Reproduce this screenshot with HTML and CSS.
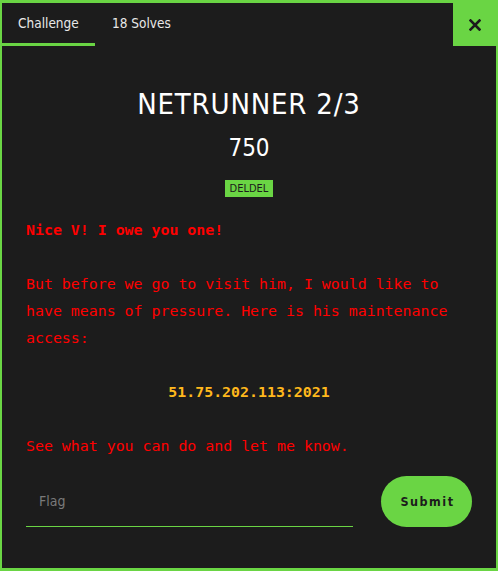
FILE: index.html
```html
<!DOCTYPE html>
<html>
<head>
<meta charset="utf-8">
<link rel="stylesheet" href="styles.css">
</head>
<body>
<div class="modal">
  <div class="header">
    <div class="tab active">Challenge</div>
    <div class="tab">18 Solves</div>
    <div class="spacer"></div>
    <button class="close" aria-label="Close">
      <svg width="12" height="12" viewBox="0 0 12 12"><path d="M1.5 1.5 L10.5 10.5 M10.5 1.5 L1.5 10.5" stroke="#1c1c1c" stroke-width="2.6" stroke-linecap="square"/></svg>
    </button>
  </div>
  <div class="content">
    <h1 class="title">NETRUNNER 2/3</h1>
    <div class="points">750</div>
    <div class="tags"><span class="tag">DELDEL</span></div>
    <div class="desc">
      <p class="strong">Nice V! I owe you one!</p>
      <p>But before we go to visit him, I would like to have means of pressure. Here is his maintenance access:</p>
      <p class="ip">51.75.202.113:2021</p>
      <p>See what you can do and let me know.</p>
    </div>
    <div class="form">
      <input class="flag" type="text" placeholder="Flag">
      <button class="submit">Submit</button>
    </div>
  </div>
</div>
</body>
</html>
```
FILE: styles.css
```css
html, body {
  margin: 0;
  padding: 0;
  background: #1c1c1c;
}
.modal {
  box-sizing: border-box;
  width: 498px;
  height: 571px;
  border-style: solid;
  border-color: #6ad544;
  border-width: 3px 2px 3px 2px;
  background: #1c1c1c;
  font-family: "DejaVu Sans Condensed", "DejaVu Sans", sans-serif;
  font-stretch: condensed;
  color: #eeeeee;
}
.header {
  display: flex;
  height: 43px;
}
.tab {
  box-sizing: border-box;
  height: 43px;
  padding: 12px 16px 0 17px;
  font-size: 13.5px;
  color: #e8e8e8;
}
.tab.active {
  width: 93px;
  padding-left: 16px;
  border-bottom: 3px solid #6ad544;
}
.spacer { flex: 1; }
.close {
  width: 43px;
  height: 43px;
  border: 0;
  margin: 0;
  padding: 0;
  background: #6ad544;
  display: flex;
  align-items: center;
  justify-content: center;
}
.close svg { display: block; margin-left: 1px; }
.content {
  padding: 0 24px;
}
.title {
  margin: 40px 0 0 0;
  font-size: 29px;
  line-height: 36px;
  font-weight: normal;
  text-align: center;
  letter-spacing: 0.8px;
  color: #ffffff;
}
.points {
  margin-top: 10px;
  font-size: 24px;
  line-height: 32px;
  text-align: center;
  color: #ffffff;
}
.tags {
  margin-top: 13px;
  text-align: center;
  height: 17px;
}
.tag {
  display: inline-block;
  height: 17px;
  line-height: 17px;
  padding: 0 5px;
  background: #6ad544;
  color: #1c1c1c;
  font-size: 11px;
}
.desc {
  margin-top: 23px;
  font-family: "DejaVu Sans Mono", monospace;
  font-stretch: normal;
  font-size: 14.9px;
  line-height: 27px;
  color: #ff0000;
}
.desc p {
  margin: 0 0 27px 0;
}
.desc p:last-child { margin-bottom: 0; }
.desc .strong { font-weight: bold; }
.desc .ip {
  text-align: center;
  font-weight: bold;
  color: #ffb81c;
}
.form {
  margin-top: 16px;
  display: flex;
  align-items: center;
  gap: 28px;
}
.flag {
  box-sizing: border-box;
  width: 327px;
  height: 50px;
  margin: 0;
  padding: 0 0 0 13px;
  background: transparent;
  border: 0;
  border-bottom: 1px solid #6ad544;
  outline: none;
  font-family: "DejaVu Sans Condensed", "DejaVu Sans", sans-serif;
  font-stretch: condensed;
  font-size: 14px;
  color: #eeeeee;
}
.flag::placeholder { color: #7a7a7a; }
.submit {
  width: 91px;
  height: 51px;
  border: 0;
  border-radius: 26px;
  background: #6ad544;
  color: #1c1c1c;
  font-family: "DejaVu Sans Condensed", "DejaVu Sans", sans-serif;
  font-stretch: condensed;
  font-weight: bold;
  font-size: 12.5px;
  letter-spacing: 1.5px;
  padding: 0 0 0 2px;
}
```
